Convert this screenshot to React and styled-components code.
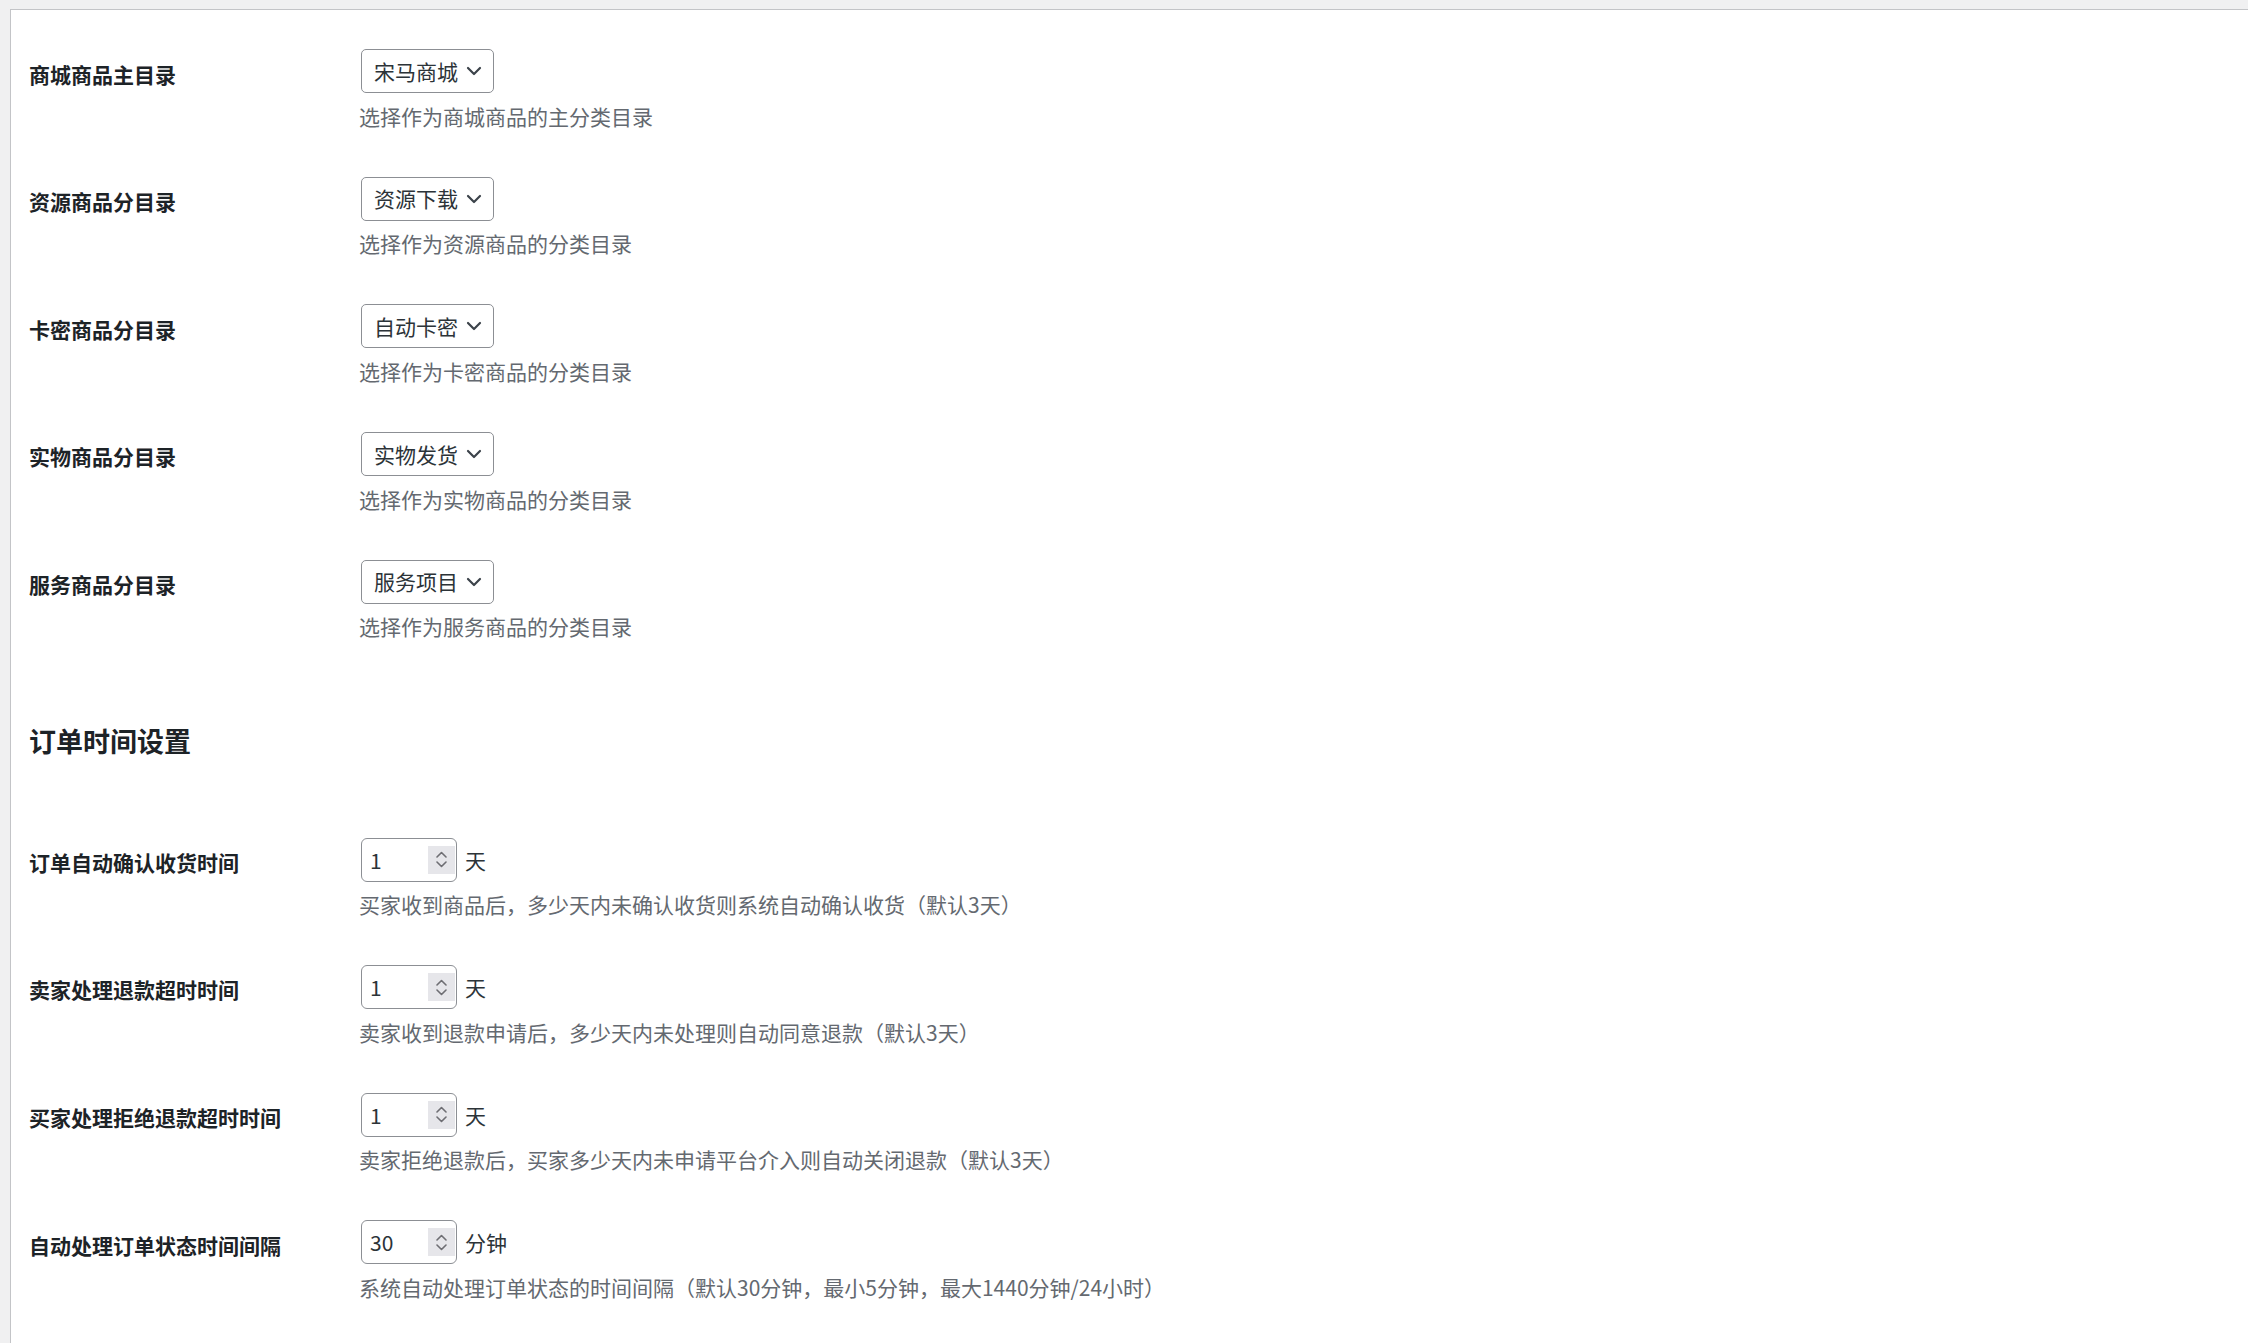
import styled, { createGlobalStyle } from 'styled-components';

const GlobalStyle = createGlobalStyle`
  html, body {
    margin: 0;
    padding: 0;
    background: #f0f0f1;
    overflow: hidden;
  }
  body {
    font-family: "Noto Sans CJK SC", "Noto Sans", sans-serif;
    color: #1d2327;
  }
`;

const Panel = styled.div`
  margin: 9px 0 0 10px;
  min-height: calc(100vh - 9px);
  box-sizing: border-box;
  background: #fff;
  border-top: 1px solid #c3c4c7;
  border-left: 1px solid #c3c4c7;
  padding: 17px 0 0 18px;
`;

const Row = styled.div`
  display: grid;
  grid-template-columns: 332px 1fr;
  align-items: start;
`;

const Label = styled.div`
  padding-top: 31.5px;
  font-size: 21px;
  line-height: 30px;
  font-weight: 700;
  color: #1d2327;
`;

const Field = styled.div`
  padding: 22.3px 0 23.8px;
  display: flex;
  flex-direction: column;
  align-items: flex-start;
`;

const Control = styled.div`
  display: flex;
  align-items: center;
  gap: 8px;
`;

const SelectBox = styled.div`
  display: inline-flex;
  align-items: center;
  gap: 8px;
  height: 44px;
  box-sizing: border-box;
  padding: 0 11px 0 12px;
  border: 1px solid #8c8f94;
  border-radius: 5px;
  background: #fff;
  font-size: 21px;
  color: #2c3338;
  line-height: 1;
`;

const NumberBox = styled.div`
  display: flex;
  align-items: center;
  width: 96px;
  height: 44px;
  box-sizing: border-box;
  padding: 0 1px 0 8px;
  border: 1px solid #8c8f94;
  border-radius: 6px;
  background: #fff;
  font-size: 21px;
  color: #2c3338;
`;

const Value = styled.span`
  flex: 1;
`;

const Spinner = styled.div`
  width: 27px;
  height: 28px;
  background: #e6e6ea;
  display: flex;
  flex-direction: column;
  align-items: center;
  justify-content: center;
  gap: 3px;
`;

const Unit = styled.span`
  font-size: 21px;
  color: #2c3338;
`;

const Description = styled.p`
  margin: 7.5px 0 0 -2px;
  font-size: 21px;
  line-height: 30px;
  color: #646970;
  white-space: nowrap;
`;

const Heading = styled.h2`
  margin: 58px 0 56.4px;
  font-size: 27px;
  line-height: 36px;
  font-weight: 700;
  color: #1d2327;
`;

const Chevron = () => (
  <svg width="16" height="10" viewBox="0 0 16 10">
    <path d="M2 2 L8 8 L14 2" fill="none" stroke="#3c434a" strokeWidth="2.2" strokeLinecap="round" strokeLinejoin="round" />
  </svg>
);

const SpinArrow = ({ down }) => (
  <svg width="11" height="7" viewBox="0 0 11 7">
    <path d={down ? 'M1 1 L5.5 5.5 L10 1' : 'M1 6 L5.5 1.5 L10 6'} fill="none" stroke="#6e6e73" strokeWidth="1.6" strokeLinecap="round" strokeLinejoin="round" />
  </svg>
);

const categories = [
  ['商城商品主目录', '宋马商城', '选择作为商城商品的主分类目录'],
  ['资源商品分目录', '资源下载', '选择作为资源商品的分类目录'],
  ['卡密商品分目录', '自动卡密', '选择作为卡密商品的分类目录'],
  ['实物商品分目录', '实物发货', '选择作为实物商品的分类目录'],
  ['服务商品分目录', '服务项目', '选择作为服务商品的分类目录'],
];

const timings = [
  ['订单自动确认收货时间', '1', '天', '买家收到商品后，多少天内未确认收货则系统自动确认收货（默认3天）'],
  ['卖家处理退款超时时间', '1', '天', '卖家收到退款申请后，多少天内未处理则自动同意退款（默认3天）'],
  ['买家处理拒绝退款超时时间', '1', '天', '卖家拒绝退款后，买家多少天内未申请平台介入则自动关闭退款（默认3天）'],
  ['自动处理订单状态时间间隔', '30', '分钟', '系统自动处理订单状态的时间间隔（默认30分钟，最小5分钟，最大1440分钟/24小时）'],
];

export default function App() {
  return (
    <>
      <GlobalStyle />
      <Panel>
        {categories.map(([label, value, desc]) => (
          <Row key={label}>
            <Label>{label}</Label>
            <Field>
              <SelectBox>
                {value}
                <Chevron />
              </SelectBox>
              <Description>{desc}</Description>
            </Field>
          </Row>
        ))}

        <Heading>订单时间设置</Heading>

        {timings.map(([label, value, unit, desc]) => (
          <Row key={label}>
            <Label>{label}</Label>
            <Field>
              <Control>
                <NumberBox>
                  <Value>{value}</Value>
                  <Spinner>
                    <SpinArrow />
                    <SpinArrow down />
                  </Spinner>
                </NumberBox>
                <Unit>{unit}</Unit>
              </Control>
              <Description>{desc}</Description>
            </Field>
          </Row>
        ))}
      </Panel>
    </>
  );
}
